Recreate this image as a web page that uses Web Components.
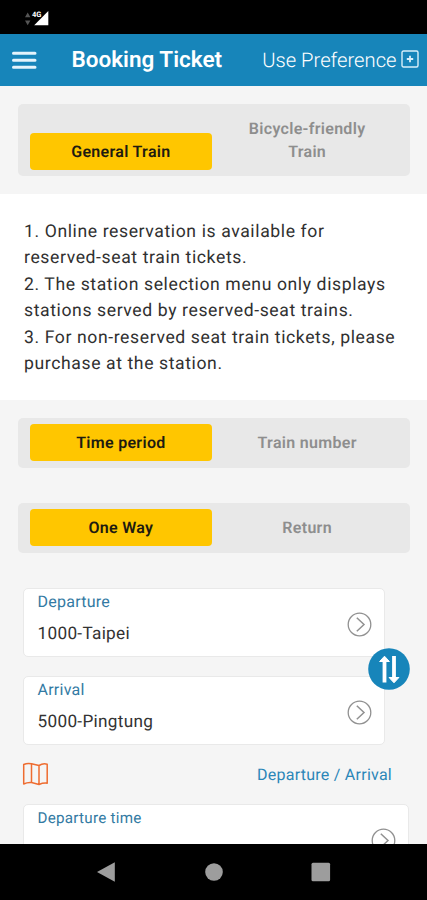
<!DOCTYPE html>
<html lang="en">
<head>
<meta charset="utf-8">
<title>Booking Ticket</title>
<style>
  html, body { margin: 0; height: 100%; }
  body { font-family: Roboto, "Liberation Sans", sans-serif; background: #f5f5f5; overflow: hidden; text-rendering: geometricPrecision; }
</style>
</head>
<body>
<booking-app></booking-app>
<script>
const define = (name, html) => {
  const t = document.createElement('template');
  t.innerHTML = html;
  customElements.define(name, class extends HTMLElement {
    constructor() {
      super();
      this.attachShadow({ mode: 'open' }).append(t.content.cloneNode(true));
    }
  });
};

define('status-bar', `
<style>
  :host { display: flex; height: 34px; box-sizing: border-box; padding: 8px 0 0 24px; background: #000; }
  svg { display: block; }
</style>
<svg width="26" height="20" viewBox="0 0 26 20">
  <path d="M1 9.300h5.400L3.700 4.600zM1 12.500h5.400L3.700 17.200z" fill="#555"/>
  <path d="M24.300 3v14.200H10.200z" fill="#fff"/>
  <text x="8" y="8.500" font-family="Roboto, sans-serif" font-size="7.500" font-weight="700" fill="#fff" stroke="#000" stroke-width="1" paint-order="stroke">4G</text>
</svg>`);

define('app-header', `
<style>
  :host { display: flex; align-items: center; height: 52px; box-sizing: border-box; padding: 0 8.500px 0 12px; background: #1785ba; color: #fff; }
  svg { display: block; flex: none; }
  h1 { margin: 0 0 0 34.500px; font-size: 22.500px; line-height: 52px; font-weight: 600; letter-spacing: 0; white-space: nowrap; }
  .pref { margin-left: auto; display: flex; align-items: center; gap: 4px; font-size: 20.200px; font-weight: 300; letter-spacing: 0; white-space: nowrap; }
  .pref svg { margin-bottom: 2px; }
</style>
<svg width="25" height="20" viewBox="0 0 25 20"><path d="M1.500 3.300h21.500M1.500 10.300h21.500M1.500 17.300h21.500" stroke="#e4f4fc" stroke-width="3" stroke-linecap="round"/></svg>
<h1><slot></slot></h1>
<div class="pref"><slot name="action"></slot>
<svg width="18" height="18" viewBox="0 0 18 18" fill="none" stroke="#d9effa"><rect x="1" y="1" width="16" height="16" rx="1.500" stroke-width="1.400"/><path d="M9 5.800v6.400M5.800 9h6.400" stroke-width="1.800"/></svg></div>`);

define('segment-control', `
<style>
  :host { display: flex; align-items: flex-end; box-sizing: border-box; margin: 0 17px 0 18px; padding: 6px 12px; background: #e8e8e8; border-radius: 5px; }
</style>
<slot></slot>`);

define('segment-option', `
<style>
  :host { display: block; box-sizing: border-box; width: 182px; padding: 7px 20px; text-align: center; font-size: 16px; line-height: 23px; font-weight: 600; letter-spacing: .3px; color: #8e8e8e; border-radius: 4px; }
  :host([selected]) { background: #ffc600; color: #1e1b10; }
  :host(:not([selected])) { margin-left: 4.500px; }
</style>
<slot></slot>`);

define('notice-text', `
<style>
  :host { display: block; height: 206px; box-sizing: border-box; padding: 24.500px 0 0 24px; background: #fff; font-size: 17.600px; line-height: 26.600px; letter-spacing: .6px; color: #303030; white-space: nowrap; }
</style>
<slot></slot>`);

define('pick-field', `
<style>
  :host { display: flex; justify-content: space-between; box-sizing: border-box; height: 69px; width: 362px; padding: 2.500px 12px 0 13.500px; background: #fff; border: 1.500px solid #e9e9e9; border-radius: 5px; }
  .label { font-size: var(--label-size, 16px); line-height: 20px; letter-spacing: .25px; color: #337aa3; }
  .value { margin-top: 12px; font-size: 17.200px; line-height: 21px; letter-spacing: .3px; color: #333; }
  svg { display: block; flex: none; margin-top: 20.500px; }
</style>
<div><div class="label"><slot name="label"></slot></div><div class="value"><slot></slot></div></div>
<svg width="25" height="25" viewBox="0 0 25 25" fill="none" stroke="#919191" stroke-width="1.300"><circle cx="12.500" cy="12.500" r="11.300"/><path d="M9.800 5.800l7.200 6.700-7.200 6.700" stroke-width="1.500"/></svg>`);

define('swap-button', `
<style>
  :host { position: absolute; left: 368px; top: 60px; width: 42px; height: 42px; }
  svg { display: block; }
</style>
<svg width="42" height="42" viewBox="0 0 42 42"><circle cx="21" cy="21" r="20.800" fill="#1785ba"/><path d="M16.500 34.500V11M26 8v23" stroke="#fff" stroke-width="3.800"/><path d="M11.600 13.500L16.500 8.200l4.900 5.300zM21.100 29.500L26 34.800l4.900-5.300z" fill="#fff" stroke="#fff" stroke-width="1" stroke-linejoin="round"/></svg>`);

define('station-link', `
<style>
  :host { display: flex; justify-content: space-between; align-items: center; height: 30px; padding: 0 35px 0 22px; font-size: 16px; letter-spacing: .25px; color: #2b86b8; }
  svg { display: block; }
</style>
<svg width="27" height="24" viewBox="0 0 27 24" fill="none" stroke="#ee6c30" stroke-width="1.500" stroke-linejoin="round"><path d="M1.700 2.500Q5.500.8 9.500 1.800L17 3.500Q21 1 25.200 2.200V21.200Q21 20.800 17 22.500L9.500 20.600Q5.500 20.200 1.700 22zM9.500 1.800v18.800M17 3.500v19"/></svg>
<slot></slot>`);

define('nav-bar', `
<style>
  :host { display: flex; align-items: center; justify-content: space-between; height: 56px; box-sizing: border-box; padding: 0 96px; background: #000; position: absolute; left: 0; right: 0; bottom: 0; }
  svg { display: block; }
</style>
<svg width="20" height="20" viewBox="0 0 20 20"><path d="M1 10L18.800.3v19.400z" fill="#9d9d9d"/></svg>
<svg width="20" height="20" viewBox="0 0 20 20"><circle cx="10" cy="10" r="8.800" fill="#9d9d9d"/></svg>
<svg width="20" height="20" viewBox="0 0 20 20"><rect x=".5" y=".7" width="18.600" height="18.600" rx="1.500" fill="#9d9d9d"/></svg>`);

define('booking-app', `
<style>
  :host { display: block; position: relative; width: 427px; height: 900px; overflow: hidden; background: #f5f5f5; }
  .mode { padding: 18px 0; }
  .mode segment-control { height: 72px; }
  .period { margin-top: 18px; }
  .period, .way { height: 50px; padding-bottom: 7px; }
  .way { margin-top: 35px; }
  .stations { position: relative; display: flex; flex-direction: column; gap: 19px; margin-top: 35px; padding-left: 23px; }
  station-link { margin-top: 14px; }
  .time { --label-size: 15.200px; width: 386px; margin: 15px 0 0 23px; }
</style>
<status-bar></status-bar>
<app-header>Booking Ticket<span slot="action">Use Preference</span></app-header>
<div class="mode">
  <segment-control><segment-option selected>General Train</segment-option><segment-option>Bicycle-friendly Train</segment-option></segment-control>
</div>
<notice-text>1. Online reservation is available for<br>reserved-seat train tickets.<br>2. The station selection menu only displays<br>stations served by reserved-seat trains.<br>3. For non-reserved seat train tickets, please<br>purchase at the station.</notice-text>
<segment-control class="period"><segment-option selected>Time period</segment-option><segment-option>Train number</segment-option></segment-control>
<segment-control class="way"><segment-option selected>One Way</segment-option><segment-option>Return</segment-option></segment-control>
<div class="stations">
  <pick-field><span slot="label">Departure</span>1000-Taipei</pick-field>
  <pick-field><span slot="label">Arrival</span>5000-Pingtung</pick-field>
  <swap-button></swap-button>
</div>
<station-link>Departure / Arrival</station-link>
<pick-field class="time"><span slot="label">Departure time</span></pick-field>
<nav-bar></nav-bar>`);
</script>
</body>
</html>
